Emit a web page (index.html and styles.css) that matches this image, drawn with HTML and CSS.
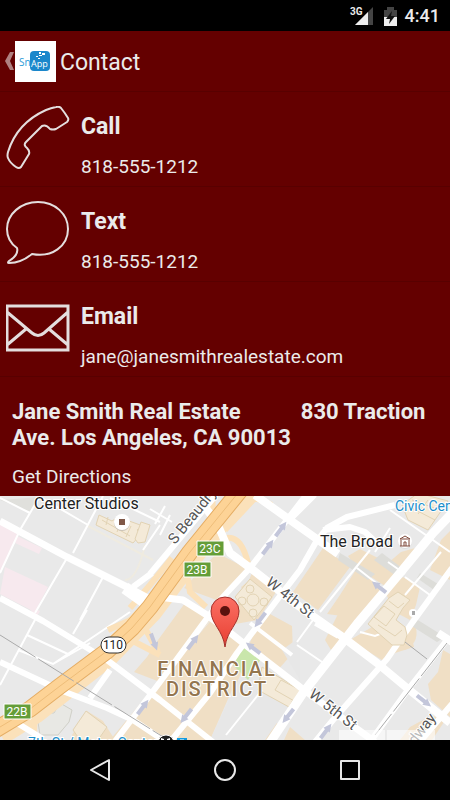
FILE: index.html
```html
<!DOCTYPE html>
<html lang="en">
<head>
<meta charset="utf-8">
<meta name="viewport" content="width=device-width, initial-scale=1">
<title>Contact</title>
<link rel="stylesheet" href="styles.css">
</head>
<body>
<div class="status">
  <div class="signal">
    <span class="network">3G</span>
    <svg width="18" height="18" viewBox="0 0 18 18" aria-hidden="true"><path d="M18 0V18H0z" fill="#444"/><path d="M13 5V18H0z" fill="#eee"/></svg>
  </div>
  <svg class="battery" width="13" height="19" viewBox="0 0 13 19" aria-hidden="true"><path d="M0 3h3V0h7v3h3v8H0z" fill="#444"/><path d="M0 10h13v9H0z" fill="#eee"/><path d="M8 4 2 12h4l-1 5 6-8H7z" fill="#111"/></svg>
  <time class="clock">4:41</time>
</div>

<header class="bar">
  <button class="back" aria-label="Back">
    <svg width="9" height="20" viewBox="0 0 9 20"><path d="M5 1h4L5 10l4 9H5L0 10z" fill="#b08080"/></svg>
    <svg class="logo" width="41" height="41" viewBox="0 0 41 41">
      <rect width="41" height="41" fill="#fff"/>
      <rect x="15" y="10" width="20" height="20" rx="4" fill="#1b87cb"/>
      <g fill="#fff"><rect x="24" y="11" width="2" height="2"/><rect x="27" y="12" width="3" height="2"/><rect x="24" y="14" width="2" height="1"/><rect x="21" y="15" width="2" height="1"/><rect x="23" y="17" width="2" height="1"/><rect x="26" y="14" width="1" height="1"/></g>
      <text x="4" y="25" class="logo-text" fill="#2e9bd8">Sn</text><text x="16" y="26" class="logo-text app" fill="#fff">App</text>
    </svg>
  </button>
  <h1>Contact</h1>
</header>

<main>
  <a class="row" href="tel:8185551212">
    <svg class="icon" viewBox="0 0 64 64"><path d="M50 1Q53 0 55 2Q59 7 62 12Q63 14 61 16L50 23Q47 24 44 23Q40 18 36 20L20 36Q17 39 21 42Q24 45 23 48L15 61Q13 63 10 61Q4 57 2 52Q1 50 2 46Q11 17 40 4Q45 2 50 1Z"/></svg>
    <span class="lines"><strong>Call</strong><span>818-555-1212</span></span>
  </a>
  <a class="row" href="sms:8185551212">
    <svg class="icon" viewBox="0 0 64 64"><path d="M32 1C49 1 62 13 62 28C62 45 46 57 26 53Q15 62 3 62Q1 62 3 60Q13 54 11 47Q1 40 1 28C1 13 15 1 32 1Z"/></svg>
    <span class="lines"><strong>Text</strong><span>818-555-1212</span></span>
  </a>
  <a class="row" href="mailto:jane@janesmithrealestate.com">
    <svg class="icon envelope" viewBox="0 0 64 64"><path d="M1 10H62V54H1zM1 16 26 37Q32 42 38 37L62 16M1 49 20 33M62 49 43 33"/></svg>
    <span class="lines"><strong>Email</strong><span>jane@janesmithrealestate.com</span></span>
  </a>
  <a class="address" href="#map">
    <strong>Jane Smith Real Estate&nbsp;&nbsp;&nbsp;&nbsp;&nbsp;&nbsp;&nbsp;&nbsp;&nbsp;&nbsp; 830 Traction Ave. Los Angeles, CA 90013</strong>
    <span>Get Directions</span>
  </a>
</main>

<section class="map" id="map" aria-label="Map">
<svg viewBox="0 496 450 244" preserveAspectRatio="xMidYMin slice">
  <rect y="490" width="450" height="400" fill="#e9e9e9"/>
  <g fill="#f7e9ee">
    <path d="M0 523 18 533 0 573zM17 536 42 548 39 554 15 543zM5 567 48 587 35 612 0 594z"/><path d="M28 606 40 611 36 618z"/>
  </g>
  <path d="M0 500 40 497 30 512z" fill="#e0e0dc"/>
  <g fill="#f0dfc5">
    <path d="M217 553 250 570 222 602 184 588zM185 603 212 618 187 648 160 682 134 672 147 657 158 640z"/>
    <path d="M214 617 260 653 232 690 210 740H110L160 680z"/>
    <path d="M256 628 270 614 292 626 293 653 276 672 249 645zM252 573 276 592 258 620 230 625z"/>
    <path d="M293 592 323 548 350 567 318 610zM357 568 387 592 364 619 327 614 340 595zM348 556 360 549 388 563 401 552 415 548 388 588 356 567z"/>
    <path d="M403 577 420 587 416 605 410 620 395 612 385 592zM340 610 367 617 347 640 331 650 325 640zM355 637 372 627 410 630 414 647 395 653 385 662 350 640z"/>
    <path d="M414 621Q422 642 405 650L398 645z"/>
    <path d="M441 540 450 531V580L430 570zM443 650 450 654V717L431 700 428 684 438 672zM410 727 432 715 444 722 432 740H400zM267 720 282 725 272 740H250zM72 735 87 711 103 721 115 740H75zM290 727 305 740H284z"/>
    <path d="M241 587 250 580 270 597 257 612z"/>
  </g>
  <g fill="#e7e7e7"><path d="M246 663 300 690 265 740H210zM282 650 300 637V680z"/></g>
  <path d="M244 647 262 657 256 667 248 680 233 665z" fill="#c9e6ab"/>
  <path d="M340 553 375 574 368 580 338 560zM382 553 402 568 396 576 374 560zM413 617 445 637 437 642 410 625zM420 573 438 584 434 590 417 578z" fill="#ddddd9"/>
  <!-- building outlines -->
  <g fill="#f4ead8" stroke="#e2d3b4" stroke-width="1">
    <path d="M99 515 112 521 118 517 143 526 137 530 141 534 133 543 96 525z"/><path d="M141 522 150 525 145 542 138 543 135 539z"/>
    <path d="M235 597 250 579 272 597 254 620z"/><path d="M402 505 418 493 448 501 428 530 408 520z"/>
    <path d="M262 667 299 689 289 707 258 690z"/><path d="M73 730 86 711 107 727 98 740H80z"/>
    <path d="M281 680 300 690 296 702 275 690z"/>
  </g>
  <g fill="none" stroke="#e2d3b4" stroke-width="1">
    <path d="M102 520 130 536M108 517 106 525M121 522 117 532M131 526 126 537M408 506 435 520M412 500 440 510M418 514 428 500"/>
    <circle cx="250" cy="589" r="4"/><circle cx="242" cy="601" r="4"/><circle cx="264" cy="602" r="4"/><circle cx="253" cy="613" r="4"/><circle cx="253" cy="600" r="6"/>
  </g>
  <path d="M38 722 47 713 54 713 60 703 72 710 69 722 58 735H40z" fill="#e8e8e4" stroke="#d0d0c8"/>
  <path d="M88 526 153 560M145 545Q137 580 125 580" fill="none" stroke="#efebe0" stroke-width="2"/>
  <!-- side streets -->
  <g fill="none" stroke="#fff" stroke-width="2">
    <path d="M0 573 20 530 40 496M73 553 103 496M67 558 35 613M103 577 80 620M0 498 30 513M40 497 88 525M110 498 160 522M160 525 143 550M0 685 36 618M27 635 70 655M18 650 53 664 90 643M87 610 73 634M53 664 130 612"/>
    <path d="M150 509 172 522M170 515 160 535M320 612 370 550M357 568 385 590M390 510 450 552M388 562 405 574M405 577 430 595M441 552 405 595M226 735 262 690M297 645 325 664M297 642 313 620M360 632 375 636 385 632"/>
    <path d="M155 524 165 506M375 552 390 528"/>
  </g>
  <!-- freeway ramps -->
  <g fill="none" stroke="#fbe1ba">
    <path d="M245 490 194 553 151 611 107 656 35 712 0 734" stroke-width="23"/>
    <path d="M212 496 213 510M172 558 150 585 130 608M186 568 190 592 206 607M226 538Q241 535 248 563M225 530 255 498 272 505M35 710 34 733M131 640 160 655M146 630 158 652M108 630 135 618" stroke-width="6"/>
  </g>
  <!-- main streets -->
  <g fill="none" stroke="#fff" stroke-linejoin="round">
    <path d="M0 521 67 557 127 587 150 599M150 596 183 600 210 617 247 646 300 687 375 742" stroke-width="7"/>
    <path d="M205 507 217 523 230 553 253 570 300 607 340 635 377 663 407 688 450 723" stroke-width="8"/>
    <path d="M0 598 43 621 107 660 160 700 213 742M0 662 60 690 107 708 133 720 160 738M17 723 43 739M110 670 90 698M113 744 160 682 222 598 250 568 307 494" stroke-width="6"/>
    <path d="M170 742 210 693 237 653 277 600 300 570 316 542 327 528 347 517 395 505M323 530 350 527 365 532 378 544M150 574 205 508 216 495M133 587 152 573" stroke-width="6"/>
    <path d="M125 588 149 605" stroke-width="12"/>
    <path d="M255 495 290 520 338 554M290 518 314 494" stroke-width="8"/>
    <path d="M455 510 433 533 400 573 357 624 303 693 269 744" stroke-width="9"/>
    <path d="M452 568 412 623 387 659 333 720 315 742M447 640 410 687 370 742M452 704 418 744" stroke-width="6"/>
    <path d="M438 633 452 642M316 622 339 635" stroke-width="8"/>
    <path d="M250 623 292 655" stroke-width="4"/>
  </g>
  <!-- library -->
  <g fill="#f4ead8" stroke="#e2d3b4" stroke-width="1">
    <path d="M368 624 389 598 398 592 410 600 403 608 396 620 405 627 407 635 404 645 392 645z"/>
    <path d="M374 617 384 606 395 614 386 626zM378 625 395 636 402 630M389 601 398 608 404 603" fill="none"/>
  </g>
  <!-- freeway -->
  <g fill="none" stroke-linejoin="round">
    <path d="M242 488 190 552 150 607 132 628 107 651 60 686 30 709-5 730" stroke="#e5ad64" stroke-width="17"/>
    <path d="M242 488 190 552 150 607 132 628 107 651 60 686 30 709-5 730" stroke="#fdd396" stroke-width="15"/>
    <path d="M242 488 190 552 150 607 132 628 107 651 60 686 30 709-5 730" stroke="#eebd79"/>
    <path d="M0 635 160 735 175 744M447 643 375 735M405 642 427 659" stroke="#aaa" stroke-dasharray="42 3"/>
  </g>
  <!-- one-way arrows -->
  <defs><path id="arrow" d="M-9-2H1V-4L9 0 1 4V2H-9z" fill="#c3c6da"/></defs>
  <use href="#arrow" transform="translate(268 547) rotate(-53)"/><use href="#arrow" transform="translate(281 529) rotate(-53)"/>
  <use href="#arrow" transform="translate(379 587) rotate(218)"/><use href="#arrow" transform="translate(260 620) rotate(127)"/>
  <use href="#arrow" transform="translate(253 648) rotate(217)"/><use href="#arrow" transform="translate(193 642) rotate(-53)"/>
  <use href="#arrow" transform="translate(154 642) rotate(70)"/><use href="#arrow" transform="translate(143 707) rotate(-53)"/>
  <use href="#arrow" transform="translate(186 716) rotate(128)"/><use href="#arrow" transform="translate(288 716) rotate(128)"/>
  <use href="#arrow" transform="translate(424 701) rotate(38)"/><use href="#arrow" transform="translate(326 731) rotate(-53)"/>
  <!-- labels -->
  <g class="street">
    <text transform="translate(175 545) rotate(-51)">S Beaudry</text>
    <text transform="translate(265 584) rotate(38)">W 4th St</text>
    <text transform="translate(308 696) rotate(38)">W 5th St</text>
    <text transform="translate(396 770) rotate(-52)">Broadway</text>
  </g>
  <g class="exit">
    <path d="M197 541h27v15h-27zM184 562h27v15h-27zM4 704h27v15H4z" fill="#649d38" stroke="#fff"/>
    <text x="210" y="553">23C</text><text x="197" y="574">23B</text><text x="17" y="716">22B</text>
  </g>
  <rect x="101" y="637" width="25" height="16" rx="8" fill="#fff" stroke="#333" stroke-width="1"/>
  <text x="113" y="649" class="route">110</text>
  <circle cx="122" cy="523" r="8" fill="#c9c2b6"/><circle cx="122" cy="522" r="8" fill="#fff"/><path d="M119 519h6v6h-6z" fill="#805848"/>
  <circle cx="405" cy="542" r="7" fill="#ddd"/><circle cx="405" cy="541" r="7" fill="#fff"/>
  <path d="M400 539 405 536 410 539zM401 540V546M409 540V546M400 546H410M404 546V542H406V546" fill="none" stroke="#804b3c" stroke-width="1"/>
  <circle cx="413" cy="613" r="4" fill="#fff"/><rect x="412" y="611" width="3" height="4" fill="#aaa"/>
  <text x="34" y="509" class="place">Center Studios</text>
  <text x="320" y="547" class="place">The Broad</text>
  <text x="395" y="511" class="transit">Civic Center</text>
  <text x="28" y="748" class="transit">7th St / Metro Center</text>
  <circle cx="166" cy="743" r="8" fill="#202020" stroke="#fff"/><path d="M161 738l3 1v4h-3zM167 739l3-1v5h-3z" fill="#fff"/><rect x="177" y="738" width="10" height="10" fill="#149be0"/><path d="M180 740h4" stroke="#fff"/>
  <g class="district"><text x="217" y="676">FINANCIAL</text><text x="217" y="696">DISTRICT</text></g>
  <!-- map toolbar edge -->
  <path d="M339 730H435V750H339z" fill="#fff" fill-opacity=".6"/><path d="M386 730V750" stroke="#ddd"/>
  <!-- marker -->
  <defs><linearGradient id="pin" x1="0" y1="0" x2="0" y2="1"><stop offset="0" stop-color="#fb7065"/><stop offset="1" stop-color="#e83f31"/></linearGradient></defs>
  <path d="M225 647C223 630 211 624 211 611A14 14 0 0 1 239 611C239 624 227 630 225 647Z" fill="url(#pin)" stroke="#a4302b" stroke-width="1"/>
  <circle cx="225" cy="611" r="5" fill="#5b120e"/>
</svg>
</section>

<nav class="nav" aria-label="System">
  <button aria-label="Back"><svg width="24" height="24" viewBox="0 0 24 24"><path d="M21 2V22L3 12z"/></svg></button>
  <button aria-label="Home"><svg width="24" height="24" viewBox="0 0 24 24"><circle cx="12" cy="12" r="10"/></svg></button>
  <button aria-label="Recent apps"><svg width="24" height="24" viewBox="0 0 24 24"><path d="M3 3H21V21H3z"/></svg></button>
</nav>
</body>
</html>
```

FILE: styles.css
```css
* {
  box-sizing: border-box;
}

body {
  margin: 0;
  min-height: 100vh;
  display: flex;
  flex-direction: column;
  background: #640000;
  color: #ebebeb;
  font-family: Roboto, sans-serif;
  font-size: 19px;
  line-height: 26px;
}

button {
  padding: 0;
  border: 0;
  background: none;
}

.status {
  height: 31px;
  padding: 1px 10px 0;
  display: flex;
  justify-content: flex-end;
  align-items: center;
  background: #000;
}

.signal {
  display: flex;
  align-items: flex-start;
}

.network {
  margin-right: -8px;
  font-size: 10px;
  line-height: 10px;
  font-weight: bold;
}

.battery {
  margin: 0 8px 0 11px;
}

.clock {
  font-size: 18px;
  font-weight: 500;
}

.bar {
  height: 61px;
  padding: 0 5px;
  display: flex;
  align-items: center;
  gap: 4px;
  border-bottom: 1px solid #580000;
}

.back {
  display: flex;
  align-items: center;
  gap: 1px;
}

.logo-text {
  font: 10px "Open Sans", sans-serif;
}

.app {
  font-size: 9px;
}

h1 {
  margin: 0;
  padding-top: 4px;
  font-size: 23px;
  font-weight: 400;
}

.row {
  padding: 14px 6px 6px;
  display: flex;
  gap: 11px;
  border-bottom: 1px solid #580000;
  color: inherit;
  text-decoration: none;
}

.icon {
  width: 64px;
  height: 64px;
  fill: none;
  stroke: #e4dede;
  stroke-width: 2;
  stroke-linejoin: round;
}

.envelope {
  stroke-width: 3;
  stroke-linejoin: miter;
}

.lines {
  padding-top: 8px;
  display: flex;
  flex-direction: column;
  gap: 14px;
}

strong {
  font-size: 23px;
}

.address {
  padding: 22px 12px 6px;
  display: flex;
  flex-direction: column;
  gap: 13px;
  color: inherit;
  text-decoration: none;
}

.address strong {
  font-size: 22px;
}

.map {
  flex: 1;
  min-height: 200px;
  display: flex;
  overflow: hidden;
}

.map > svg {
  width: 100%;
  height: 100%;
}

.street {
  font-size: 15px;
  fill: #555;
}

.street text,
.place,
.transit,
.district {
  stroke: #fff;
  stroke-width: 2px;
  paint-order: stroke;
}

.exit text {
  font-size: 12px;
  fill: #fff;
  text-anchor: middle;
}

.route {
  font-size: 12px;
  fill: #222;
  text-anchor: middle;
}

.place {
  font-size: 16px;
  fill: #222;
}

.transit {
  font-size: 14px;
  fill: #1b8ecb;
}

.district {
  font-size: 20px;
  font-weight: 500;
  letter-spacing: 2px;
  fill: #93754f;
  text-anchor: middle;
}

.nav {
  height: 60px;
  padding: 0 38px;
  display: flex;
  background: #000;
}

.nav button {
  flex: 1;
  display: flex;
  align-items: center;
  justify-content: center;
}

.nav svg {
  fill: none;
  stroke: #e8e8e8;
  stroke-width: 2;
  stroke-linejoin: round;
}
```
